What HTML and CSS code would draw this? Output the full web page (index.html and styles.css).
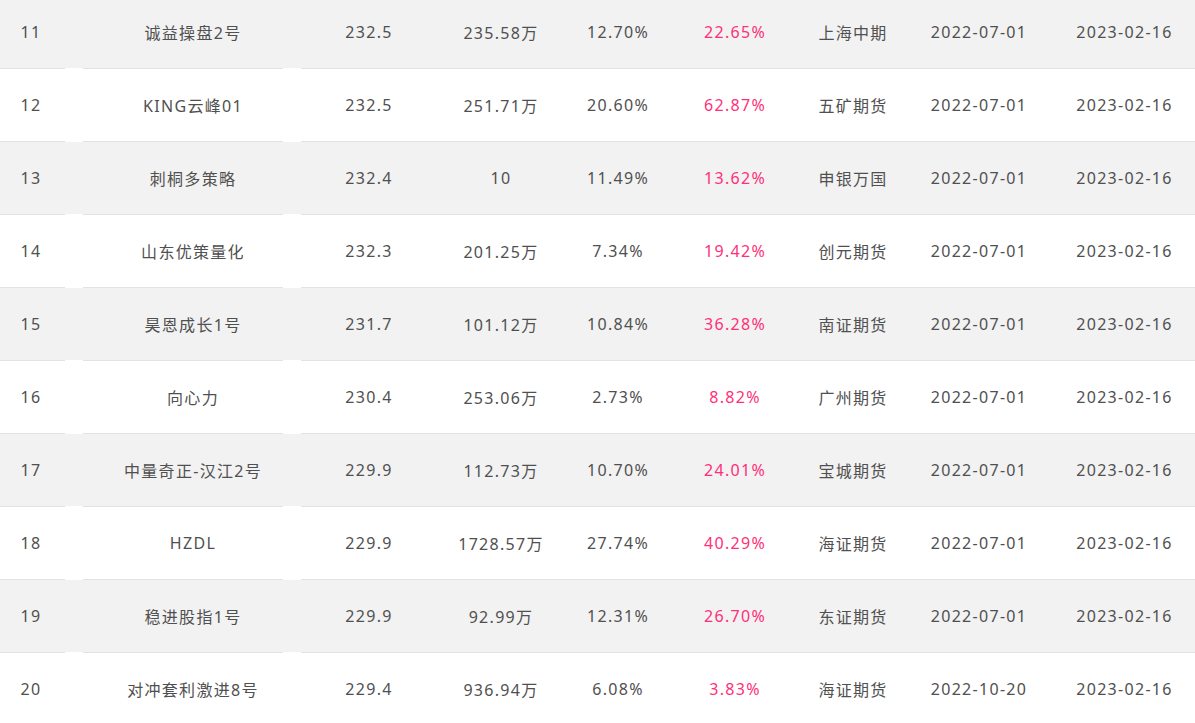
FILE: index.html
```html
<!DOCTYPE html>
<html lang="zh-CN">
<head>
<meta charset="utf-8">
<title>排行榜</title>
<link rel="stylesheet" href="styles.css">
</head>
<body>
<div class="table">
  <div class="row odd"><div class="cells"><span class="c">11</span><span class="c">诚益操盘2号</span><span class="c">232.5</span><span class="c">235.58万</span><span class="c">12.70%</span><span class="c pink">22.65%</span><span class="c">上海中期</span><span class="c">2022-07-01</span><span class="c">2023-02-16</span><span class="c"></span></div></div>
  <div class="row"><div class="cells"><span class="c">12</span><span class="c">KING云峰01</span><span class="c">232.5</span><span class="c">251.71万</span><span class="c">20.60%</span><span class="c pink">62.87%</span><span class="c">五矿期货</span><span class="c">2022-07-01</span><span class="c">2023-02-16</span><span class="c"></span></div></div>
  <div class="row odd"><div class="cells"><span class="c">13</span><span class="c">刺桐多策略</span><span class="c">232.4</span><span class="c">10</span><span class="c">11.49%</span><span class="c pink">13.62%</span><span class="c">申银万国</span><span class="c">2022-07-01</span><span class="c">2023-02-16</span><span class="c"></span></div></div>
  <div class="row"><div class="cells"><span class="c">14</span><span class="c">山东优策量化</span><span class="c">232.3</span><span class="c">201.25万</span><span class="c">7.34%</span><span class="c pink">19.42%</span><span class="c">创元期货</span><span class="c">2022-07-01</span><span class="c">2023-02-16</span><span class="c"></span></div></div>
  <div class="row odd"><div class="cells"><span class="c">15</span><span class="c">昊恩成长1号</span><span class="c">231.7</span><span class="c">101.12万</span><span class="c">10.84%</span><span class="c pink">36.28%</span><span class="c">南证期货</span><span class="c">2022-07-01</span><span class="c">2023-02-16</span><span class="c"></span></div></div>
  <div class="row"><div class="cells"><span class="c">16</span><span class="c">向心力</span><span class="c">230.4</span><span class="c">253.06万</span><span class="c">2.73%</span><span class="c pink">8.82%</span><span class="c">广州期货</span><span class="c">2022-07-01</span><span class="c">2023-02-16</span><span class="c"></span></div></div>
  <div class="row odd"><div class="cells"><span class="c">17</span><span class="c">中量奇正-汉江2号</span><span class="c">229.9</span><span class="c">112.73万</span><span class="c">10.70%</span><span class="c pink">24.01%</span><span class="c">宝城期货</span><span class="c">2022-07-01</span><span class="c">2023-02-16</span><span class="c"></span></div></div>
  <div class="row"><div class="cells"><span class="c">18</span><span class="c">HZDL</span><span class="c">229.9</span><span class="c">1728.57万</span><span class="c">27.74%</span><span class="c pink">40.29%</span><span class="c">海证期货</span><span class="c">2022-07-01</span><span class="c">2023-02-16</span><span class="c"></span></div></div>
  <div class="row odd"><div class="cells"><span class="c">19</span><span class="c">稳进股指1号</span><span class="c">229.9</span><span class="c">92.99万</span><span class="c">12.31%</span><span class="c pink">26.70%</span><span class="c">东证期货</span><span class="c">2022-07-01</span><span class="c">2023-02-16</span><span class="c"></span></div></div>
  <div class="row"><div class="cells"><span class="c">20</span><span class="c">对冲套利激进8号</span><span class="c">229.4</span><span class="c">936.94万</span><span class="c">6.08%</span><span class="c pink">3.83%</span><span class="c">海证期货</span><span class="c">2022-10-20</span><span class="c">2023-02-16</span><span class="c"></span></div></div>
</div>
</body>
</html>
```

FILE: styles.css
```css
html, body {
  margin: 0;
  padding: 0;
  background: #ffffff;
  overflow: hidden;
}
body {
  font-family: "Noto Sans", "Noto Sans CJK SC", sans-serif;
  font-size: 16px;
  letter-spacing: 1.3px;
  color: #505050;
}
.table {
  margin-top: -4px;
}
.row {
  background: #ffffff;
}
.row.odd {
  background: #f2f2f2;
}
.row::after {
  content: "";
  display: block;
  height: 1px;
  background: linear-gradient(to right,
    #e2e2e8 0 65px, #ffffff 65px 83px,
    #e2e2e8 83px 283px, #ffffff 283px 301px,
    #e2e2e8 301px);
}
.cells {
  display: grid;
  grid-template-columns: 62px 262px 90px 174px 60px 174px 62px 190px 101px 1fr;
  height: 72px;
  align-items: center;
}
.c {
  display: flex;
  justify-content: center;
  white-space: nowrap;
}
.pink {
  color: #ff2f7a;
}
```
